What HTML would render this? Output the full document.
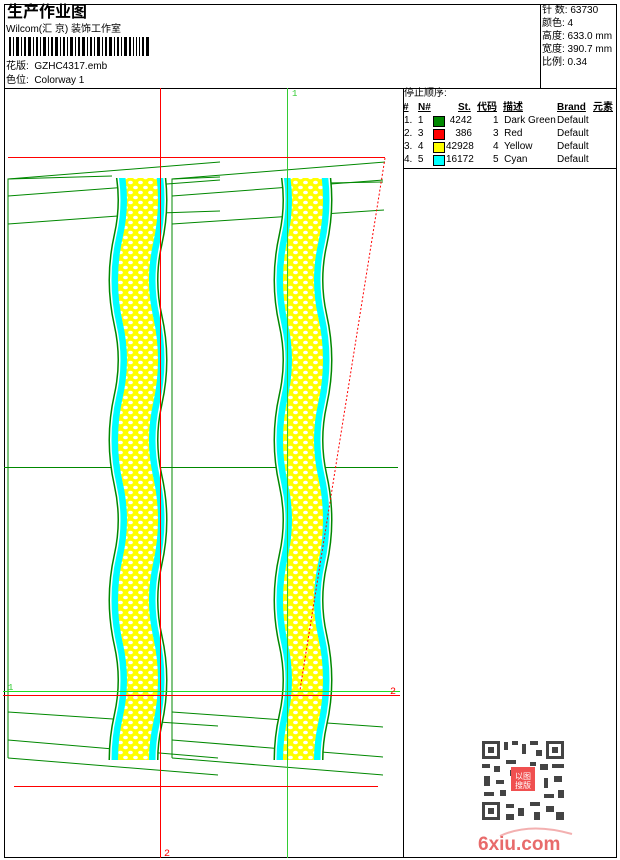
<!DOCTYPE html>
<html><head><meta charset="utf-8"><style>
html,body{margin:0;padding:0;background:#fff;}
body{width:620px;height:860px;position:relative;overflow:hidden;font-family:"Liberation Sans","Noto Sans CJK SC",sans-serif;color:#000;}
.t{position:absolute;font-size:10px;line-height:12px;white-space:nowrap;}
</style></head><body>
<svg width="620" height="860" style="position:absolute;left:0;top:0" xmlns="http://www.w3.org/2000/svg">
<defs>
<pattern id="dots" width="10" height="10" patternUnits="userSpaceOnUse">
<rect width="10" height="10" fill="#ff0"/>
<ellipse cx="2.5" cy="2.5" rx="2.4" ry="1.8" fill="#fff"/>
<ellipse cx="7.5" cy="7.5" rx="2.4" ry="1.8" fill="#fff"/>
</pattern>
<clipPath id="c1"><rect x="100" y="178" width="80" height="582"/></clipPath>
<clipPath id="c2"><rect x="265" y="178" width="80" height="582"/></clipPath>
<path id="w" d="M0,160 Q9,200 0,240 T0,320 T0,400 T0,480 T0,560 T0,640 T0,720 T0,800"/>
</defs>
<rect x="4.5" y="4.5" width="612" height="853" fill="none" stroke="#000"/>
<line x1="4" y1="88.5" x2="617" y2="88.5" stroke="#000"/>
<line x1="540.5" y1="4" x2="540.5" y2="88" stroke="#000"/>
<line x1="403.5" y1="88" x2="403.5" y2="858" stroke="#000"/>
<line x1="403" y1="168.5" x2="617" y2="168.5" stroke="#000"/>
<g fill="#000">
<rect x="9" y="37" width="2" height="19"/><rect x="13" y="37" width="1" height="19"/><rect x="16" y="37" width="3" height="19"/><rect x="21" y="37" width="1" height="19"/><rect x="24" y="37" width="2" height="19"/><rect x="28" y="37" width="3" height="19"/><rect x="33" y="37" width="1" height="19"/><rect x="36" y="37" width="2" height="19"/><rect x="40" y="37" width="1" height="19"/><rect x="43" y="37" width="3" height="19"/><rect x="48" y="37" width="1" height="19"/><rect x="51" y="37" width="2" height="19"/><rect x="55" y="37" width="3" height="19"/><rect x="60" y="37" width="1" height="19"/><rect x="63" y="37" width="2" height="19"/><rect x="67" y="37" width="1" height="19"/><rect x="70" y="37" width="3" height="19"/><rect x="75" y="37" width="1" height="19"/><rect x="78" y="37" width="2" height="19"/><rect x="82" y="37" width="3" height="19"/><rect x="87" y="37" width="1" height="19"/><rect x="90" y="37" width="2" height="19"/><rect x="94" y="37" width="1" height="19"/><rect x="97" y="37" width="3" height="19"/><rect x="102" y="37" width="1" height="19"/><rect x="105" y="37" width="2" height="19"/><rect x="109" y="37" width="3" height="19"/><rect x="114" y="37" width="1" height="19"/><rect x="117" y="37" width="2" height="19"/><rect x="121" y="37" width="1" height="19"/><rect x="124" y="37" width="3" height="19"/><rect x="129" y="37" width="2" height="19"/><rect x="133" y="37" width="1" height="19"/><rect x="136" y="37" width="1" height="19"/><rect x="139" y="37" width="1" height="19"/><rect x="142" y="37" width="2" height="19"/><rect x="146" y="37" width="3" height="19"/>
</g>
<g stroke="#080" stroke-width="1" fill="none">
<polyline points="8,758 8,179 112,176"/>
<polyline points="172,758 172,179 220,177"/>
<line x1="8" y1="179" x2="220" y2="162"/><line x1="8" y1="196" x2="220" y2="180"/>
<line x1="8" y1="224" x2="118" y2="216"/><line x1="160" y1="213" x2="220" y2="211"/>
<line x1="172" y1="179" x2="385" y2="162"/><line x1="172" y1="196" x2="383" y2="180"/>
<line x1="172" y1="224" x2="384" y2="210"/><line x1="327" y1="183" x2="383" y2="182"/>
<line x1="8" y1="712" x2="218" y2="726"/><line x1="8" y1="740" x2="218" y2="758"/><line x1="8" y1="758" x2="218" y2="775"/>
<line x1="172" y1="712" x2="383" y2="727"/><line x1="172" y1="740" x2="383" y2="757"/><line x1="172" y1="758" x2="383" y2="775"/>
<line x1="4" y1="467.5" x2="398" y2="467.5"/>
</g>
<g clip-path="url(#c1)" fill="none"><g transform="translate(138,0)">
<use href="#w" stroke="#080" stroke-width="50"/><use href="#w" stroke="#fff" stroke-width="47"/>
<use href="#w" stroke="#0ff" stroke-width="44"/><use href="#w" stroke="url(#dots)" stroke-width="31"/></g></g>
<g clip-path="url(#c2)" fill="none"><g transform="translate(303,0)">
<use href="#w" stroke="#080" stroke-width="50"/><use href="#w" stroke="#fff" stroke-width="47"/>
<use href="#w" stroke="#0ff" stroke-width="44"/><use href="#w" stroke="url(#dots)" stroke-width="31"/></g></g>
<line x1="160.5" y1="88" x2="160.5" y2="858" stroke="#f00"/>
<line x1="287.5" y1="88" x2="287.5" y2="858" stroke="#3c3"/>
<line x1="8" y1="157.5" x2="385" y2="157.5" stroke="#f00"/>
<line x1="385" y1="158" x2="300" y2="690" stroke="#f00" stroke-dasharray="2,2"/>
<line x1="3" y1="691.5" x2="400" y2="691.5" stroke="#2d2"/>
<line x1="3" y1="695.5" x2="400" y2="695.5" stroke="#f00"/>
<line x1="14" y1="786.5" x2="378" y2="786.5" stroke="#f00"/>
<text x="292" y="96" font-size="9" fill="#3c3" font-family="Liberation Mono">1</text>
<text x="8" y="690" font-size="9" fill="#3c3" font-family="Liberation Mono">1</text>
<text x="390" y="694" font-size="10" fill="#f00" font-family="Liberation Mono">2</text>
<text x="164" y="856" font-size="10" fill="#f00" font-family="Liberation Mono">2</text>
<g fill="#444">
<rect x="481" y="740" width="84" height="82" fill="#fff"/>
<rect x="482" y="741" width="18" height="18"/><rect x="485" y="744" width="12" height="12" fill="#fff"/><rect x="488" y="747" width="6" height="6"/>
<rect x="546" y="741" width="18" height="18"/><rect x="549" y="744" width="12" height="12" fill="#fff"/><rect x="552" y="747" width="6" height="6"/>
<rect x="482" y="802" width="18" height="18"/><rect x="485" y="805" width="12" height="12" fill="#fff"/><rect x="488" y="808" width="6" height="6"/>
<rect x="504" y="742" width="4" height="8"/><rect x="512" y="741" width="6" height="4"/><rect x="522" y="744" width="4" height="10"/><rect x="530" y="741" width="8" height="4"/><rect x="536" y="750" width="6" height="6"/>
<rect x="482" y="764" width="8" height="4"/><rect x="494" y="766" width="6" height="6"/><rect x="506" y="760" width="10" height="4"/><rect x="540" y="764" width="8" height="6"/><rect x="552" y="764" width="12" height="4"/>
<rect x="484" y="776" width="6" height="10"/><rect x="496" y="780" width="8" height="4"/><rect x="544" y="778" width="4" height="10"/><rect x="554" y="776" width="8" height="6"/>
<rect x="484" y="792" width="10" height="4"/><rect x="500" y="790" width="6" height="6"/><rect x="544" y="794" width="10" height="4"/><rect x="558" y="790" width="6" height="8"/>
<rect x="506" y="804" width="8" height="4"/><rect x="518" y="808" width="6" height="8"/><rect x="530" y="802" width="10" height="4"/><rect x="546" y="806" width="8" height="6"/><rect x="556" y="812" width="8" height="8"/><rect x="506" y="814" width="8" height="6"/><rect x="534" y="812" width="6" height="8"/>
<rect x="510" y="770" width="4" height="6"/><rect x="530" y="762" width="6" height="4"/>
<rect x="511" y="767" width="24" height="24" fill="#f05050"/>
</g>
<text x="515" y="779" font-size="8" fill="#fff" font-family="Noto Sans CJK SC">以图</text>
<text x="515" y="788" font-size="8" fill="#fff" font-family="Noto Sans CJK SC">搜版</text>
<path d="M500,836 Q530,822 572,834" stroke="#f3b0b0" stroke-width="2" fill="none"/>
<text x="478" y="850" font-size="19" font-weight="bold" fill="#e86b6b" font-family="Liberation Sans">6xiu.com</text>
</svg>
<div class="t" style="left:7px;top:4px;font-size:16px;line-height:18px;font-weight:bold;">生产作业图</div>
<div class="t" style="left:6px;top:24px;">Wilcom(汇 京) 装饰工作室</div>
<div class="t" style="left:6px;top:61px;">花版:&nbsp; GZHC4317.emb</div>
<div class="t" style="left:6px;top:75px;">色位:&nbsp; Colorway 1</div>
<div class="t" style="left:542px;top:5px;">针 数: 63730</div>
<div class="t" style="left:542px;top:18px;">颜色: 4</div>
<div class="t" style="left:542px;top:31px;">高度: 633.0 mm</div>
<div class="t" style="left:542px;top:44px;">宽度: 390.7 mm</div>
<div class="t" style="left:542px;top:57px;">比例: 0.34</div>
<div class="t" style="left:404px;top:88px;">停止顺序:</div>
<div class="t" style="left:403px;top:102px;font-weight:bold;text-decoration:underline;">#</div>
<div class="t" style="left:418px;top:102px;font-weight:bold;text-decoration:underline;">N#</div>
<div class="t" style="left:458px;top:102px;font-weight:bold;text-decoration:underline;">St.</div>
<div class="t" style="left:477px;top:102px;font-weight:bold;text-decoration:underline;">代码</div>
<div class="t" style="left:503px;top:102px;font-weight:bold;text-decoration:underline;">描述</div>
<div class="t" style="left:557px;top:102px;font-weight:bold;text-decoration:underline;">Brand</div>
<div class="t" style="left:593px;top:102px;font-weight:bold;text-decoration:underline;">元素</div>
<div style="position:absolute;left:433px;top:116px;width:10px;height:9px;background:#080;border:1px solid #000;"></div>
<div style="position:absolute;left:433px;top:129px;width:10px;height:9px;background:#f00;border:1px solid #000;"></div>
<div style="position:absolute;left:433px;top:142px;width:10px;height:9px;background:#ff0;border:1px solid #000;"></div>
<div style="position:absolute;left:433px;top:155px;width:10px;height:9px;background:#0ff;border:1px solid #000;"></div>
<div class="t" style="left:404px;top:115px;">1.&nbsp; 1</div>
<div class="t" style="left:404px;top:128px;">2.&nbsp; 3</div>
<div class="t" style="left:404px;top:141px;">3.&nbsp; 4</div>
<div class="t" style="left:404px;top:154px;">4.&nbsp; 5</div>
<div class="t" style="left:440px;top:115px;width:32px;text-align:right;">4242</div>
<div class="t" style="left:440px;top:128px;width:32px;text-align:right;">386</div>
<div class="t" style="left:446px;top:141px;">42928</div>
<div class="t" style="left:446px;top:154px;">16172</div>
<div class="t" style="left:493px;top:115px;">1&nbsp; Dark Green</div>
<div class="t" style="left:493px;top:128px;">3&nbsp; Red</div>
<div class="t" style="left:493px;top:141px;">4&nbsp; Yellow</div>
<div class="t" style="left:493px;top:154px;">5&nbsp; Cyan</div>
<div class="t" style="left:557px;top:115px;">Default</div>
<div class="t" style="left:557px;top:128px;">Default</div>
<div class="t" style="left:557px;top:141px;">Default</div>
<div class="t" style="left:557px;top:154px;">Default</div>
</body></html>
